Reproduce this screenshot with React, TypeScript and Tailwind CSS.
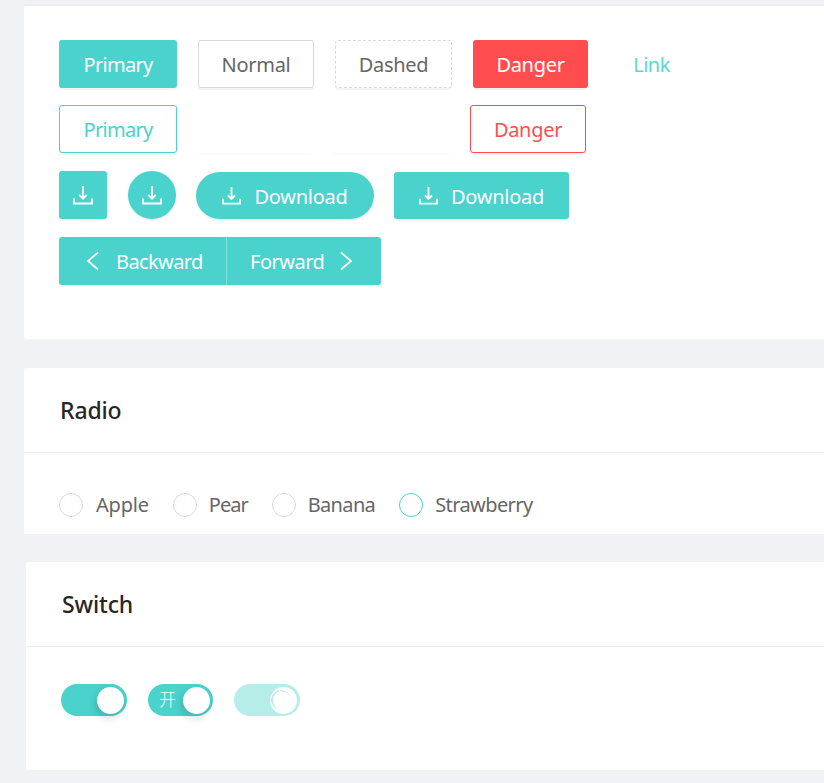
import React from 'react';

const btnBase = 'h-[48px] rounded-[3px] text-[20px] pt-[2px] flex items-center justify-center shrink-0';
const solidShadow = 'shadow-[0_2px_0_rgba(0,0,0,0.045)]';

const DownloadIcon: React.FC<{ size?: number }> = ({ size = 20 }) => (
  <svg width={size} height={size} viewBox="0 0 20 20" fill="none" stroke="currentColor" strokeWidth="1.9" className="-mt-[2px]">
    <path d="M10 1v12.5M6.2 9.8l3.8 3.8 3.8-3.8" />
    <path d="M1 13.5v5h18v-5" />
  </svg>
);

const Chevron: React.FC<{ right?: boolean }> = ({ right }) => (
  <svg width="14" height="20" viewBox="0 0 14 20" fill="none" stroke="currentColor" strokeWidth="1.7" className="-mt-[2px]">
    <path d={right ? 'M2 1.5l10 8.5-10 8.5' : 'M12 1.5L2 10l10 8.5'} />
  </svg>
);

const Radio: React.FC<{ label: string; active?: boolean; className: string; textClass: string }> = ({ label, active, className, textClass }) => (
  <label className={`flex items-center gap-[12px] ${className}`}>
    <span className={`w-[24px] h-[24px] rounded-full border bg-white ${active ? 'border-[#4ad2cd]' : 'border-[#d9d9d9]'}`}></span>
    <span className={`text-[20px] text-[#666666] ${textClass}`}>{label}</span>
  </label>
);

const App: React.FC = () => {
  return (
    <div className="w-[824px] h-[783px] overflow-hidden bg-[#f0f2f5] font-['Noto_Sans','Noto_Sans_CJK_SC',sans-serif]">
      <div className="h-[4px]"></div>

      {/* Button */}
      <div className="ml-[24px] w-[900px] h-[335px] bg-white rounded-[3px] border-t-2 border-[#ebedf0] pt-[34px] pl-[35px]">
        <div className="flex">
          <button className={`${btnBase} ${solidShadow} w-[118px] bg-[#4ad2cd] text-white tracking-[-0.7px]`}>Primary</button>
          <button className={`${btnBase} ${solidShadow} w-[116px] ml-[21px] border border-[#d9d9d9] text-[#666666] tracking-[-0.3px]`}>Normal</button>
          <button className={`${btnBase} ${solidShadow} w-[117px] ml-[21px] border border-dashed border-[#d9d9d9] text-[#666666] tracking-[-0.3px]`}>Dashed</button>
          <button className={`${btnBase} ${solidShadow} w-[115px] ml-[21px] bg-[#ff4d4f] text-white tracking-[-0.3px]`}>Danger</button>
          <button className={`${btnBase} w-[85px] ml-[21px] text-[#5ed5d1] tracking-[-0.5px]`}>Link</button>
        </div>
        <div className="flex mt-[17px]">
          <button className={`${btnBase} ${solidShadow} w-[118px] border border-[#4ad2cd] text-[#4ad2cd] tracking-[-0.7px]`}>Primary</button>
          <div className={`${btnBase} shadow-[0_2px_0_rgba(0,0,0,0.015)] w-[114px] ml-[21px]`}></div>
          <div className={`${btnBase} shadow-[0_2px_0_rgba(0,0,0,0.015)] w-[117px] ml-[21px]`}></div>
          <button className={`${btnBase} ${solidShadow} w-[116px] ml-[20px] border border-[#ff4d4f] text-[#ff4d4f] tracking-[-0.3px]`}>Danger</button>
        </div>
        <div className="flex mt-[18px] items-end">
          <button className={`${btnBase} ${solidShadow} w-[48px] bg-[#4ad2cd] text-white`}><DownloadIcon /></button>
          <button className={`${btnBase} ${solidShadow} w-[48px] ml-[21px] !rounded-full bg-[#4ad2cd] text-white`}><DownloadIcon /></button>
          <button className={`${btnBase} ${solidShadow} !h-[47px] w-[178px] ml-[20px] !rounded-full bg-[#4ad2cd] text-white gap-[13px] tracking-[-0.25px]`}><DownloadIcon size={19} />Download</button>
          <button className={`${btnBase} ${solidShadow} !h-[47px] w-[175px] ml-[20px] bg-[#4ad2cd] text-white gap-[13px] tracking-[-0.25px]`}><DownloadIcon size={19} />Download</button>
        </div>
        <div className={`flex w-[322px] h-[48px] mt-[18px] rounded-[3px] bg-[#4ad2cd] text-white text-[20px] ${solidShadow}`}>
          <button className="w-[168px] h-full pt-[2px] pl-[27px] flex items-center gap-[16px] border-r border-[#7fe0dc] tracking-[-0.6px]"><Chevron />Backward</button>
          <button className="flex-1 h-full pt-[2px] pl-[23px] flex items-center gap-[15px] tracking-[-0.5px]">Forward<Chevron right /></button>
        </div>
      </div>

      {/* Radio */}
      <div className="ml-[24px] w-[900px] h-[166px] mt-[29px] bg-white rounded-t-[3px]">
        <div className="h-[85px] pl-[36px] flex items-center border-b border-[#ebedf0] text-[23px] tracking-[-0.15px] font-medium text-[#262626]">Radio</div>
        <div className="flex items-center pl-[35px] pt-[37px]">
          <Radio label="Apple" textClass="ml-[1px] tracking-[-0.2px]" className="" />
          <Radio label="Pear" textClass="tracking-[-1px]" className="ml-[24px]" />
          <Radio label="Banana" textClass="tracking-[-0.65px]" className="ml-[24px]" />
          <Radio label="Strawberry" textClass="tracking-[-0.6px]" active className="ml-[24px]" />
        </div>
      </div>

      {/* Switch */}
      <div className="ml-[26px] w-[900px] h-[208px] mt-[28px] bg-white rounded-[3px]">
        <div className="h-[85px] pl-[36px] flex items-center border-b border-[#ebedf0] text-[23px] tracking-[-0.15px] font-medium text-[#262626]">Switch</div>
        <div className="flex items-center pl-[35px] pt-[37px]">
          <div className="relative w-[66px] h-[32px] rounded-full bg-[#4ad2cd]">
            <span className="absolute top-[3px] right-[3px] w-[27px] h-[27px] rounded-full bg-white shadow-[-2px_4px_8px_rgba(0,0,0,0.15)]"></span>
          </div>
          <div className="relative ml-[21px] w-[65px] h-[32px] rounded-full bg-[#4ad2cd] text-white text-[17px] font-light leading-[32px] pl-[11px]">
            开
            <span className="absolute top-[3px] right-[3px] w-[27px] h-[27px] rounded-full bg-white shadow-[-2px_4px_8px_rgba(0,0,0,0.15)]"></span>
          </div>
          <div className="relative ml-[21px] w-[66px] h-[32px] rounded-full bg-[#b7ede9]">
            <span className="absolute top-[3px] right-[3px] w-[27px] h-[27px] rounded-full bg-white"></span>
            <span className="absolute top-[6px] right-[9px] w-[20px] h-[20px] rounded-full border-l-2 border-t border-[#b7ede9]"></span>
          </div>
        </div>
      </div>
    </div>
  );
};

export default App;
